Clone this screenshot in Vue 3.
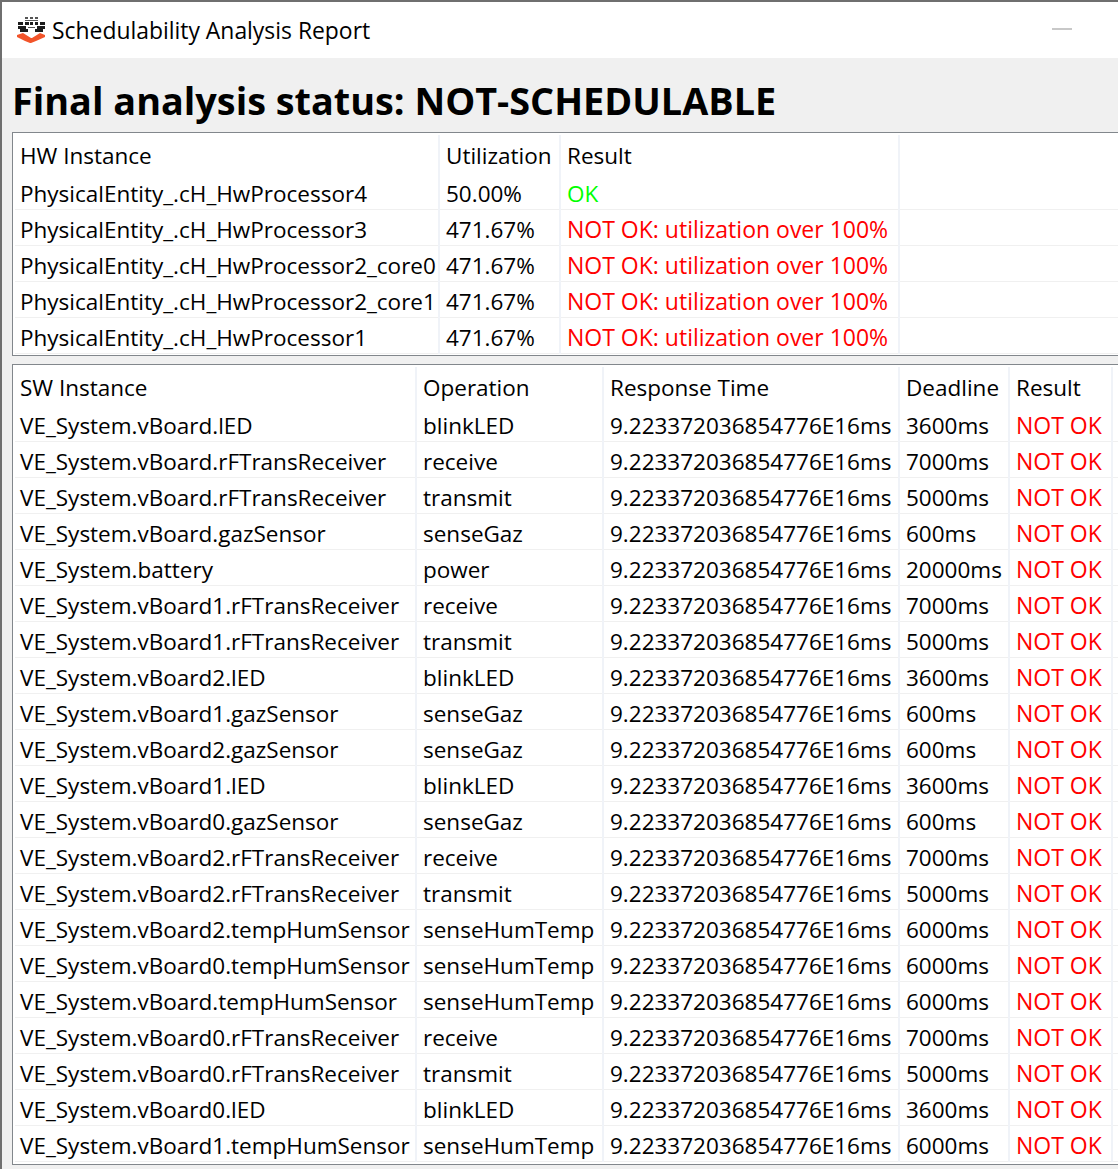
<script setup>
const hwRows = [
  ['PhysicalEntity_.cH_HwProcessor4', '50.00%', 'OK'],
  ['PhysicalEntity_.cH_HwProcessor3', '471.67%', 'NOT OK: utilization over 100%'],
  ['PhysicalEntity_.cH_HwProcessor2_core0', '471.67%', 'NOT OK: utilization over 100%'],
  ['PhysicalEntity_.cH_HwProcessor2_core1', '471.67%', 'NOT OK: utilization over 100%'],
  ['PhysicalEntity_.cH_HwProcessor1', '471.67%', 'NOT OK: utilization over 100%'],
]
const rt = '9.223372036854776E16ms'
const swRows = [
  ['VE_System.vBoard.lED', 'blinkLED', '3600ms'],
  ['VE_System.vBoard.rFTransReceiver', 'receive', '7000ms'],
  ['VE_System.vBoard.rFTransReceiver', 'transmit', '5000ms'],
  ['VE_System.vBoard.gazSensor', 'senseGaz', '600ms'],
  ['VE_System.battery', 'power', '20000ms'],
  ['VE_System.vBoard1.rFTransReceiver', 'receive', '7000ms'],
  ['VE_System.vBoard1.rFTransReceiver', 'transmit', '5000ms'],
  ['VE_System.vBoard2.lED', 'blinkLED', '3600ms'],
  ['VE_System.vBoard1.gazSensor', 'senseGaz', '600ms'],
  ['VE_System.vBoard2.gazSensor', 'senseGaz', '600ms'],
  ['VE_System.vBoard1.lED', 'blinkLED', '3600ms'],
  ['VE_System.vBoard0.gazSensor', 'senseGaz', '600ms'],
  ['VE_System.vBoard2.rFTransReceiver', 'receive', '7000ms'],
  ['VE_System.vBoard2.rFTransReceiver', 'transmit', '5000ms'],
  ['VE_System.vBoard2.tempHumSensor', 'senseHumTemp', '6000ms'],
  ['VE_System.vBoard0.tempHumSensor', 'senseHumTemp', '6000ms'],
  ['VE_System.vBoard.tempHumSensor', 'senseHumTemp', '6000ms'],
  ['VE_System.vBoard0.rFTransReceiver', 'receive', '7000ms'],
  ['VE_System.vBoard0.rFTransReceiver', 'transmit', '5000ms'],
  ['VE_System.vBoard0.lED', 'blinkLED', '3600ms'],
  ['VE_System.vBoard1.tempHumSensor', 'senseHumTemp', '6000ms'],
]
</script>

<template>
  <div class="window">
    <header class="titlebar">
      <svg class="logo" width="30" height="28" viewBox="16 16 30 28">
        <g fill="#555">
          <rect x="25" y="17" width="3" height="2" /><rect x="30" y="17" width="3" height="2" /><rect x="35" y="17" width="3" height="2" />
          <rect x="25" y="20" width="13" height="1" />
          <rect x="28" y="27" width="7" height="1" />
        </g>
        <g fill="#1c1c1c">
          <rect x="18" y="22" width="5" height="3" /><rect x="25" y="22" width="4" height="3" /><rect x="30" y="22" width="3" height="3" /><rect x="35" y="22" width="3" height="3" /><rect x="40" y="22" width="5" height="3" />
          <rect x="18" y="26" width="8" height="3" /><rect x="37" y="26" width="8" height="3" />
          <rect x="20" y="29" width="8" height="3" /><rect x="35" y="29" width="8" height="3" />
        </g>
        <path d="M17 35l6-2 8 5h1l8-5 5 2v2l-9 4-5 2h-1l-5-2-8-4z" fill="#f2542a" />
      </svg>
      <span class="title">Schedulability Analysis Report</span>
      <span class="minimize"></span>
    </header>
    <main class="content">
      <h1 class="status">Final analysis status: NOT-SCHEDULABLE</h1>
      <section class="panel hw">
        <div class="row head">
          <div class="cell">HW Instance</div><div class="cell">Utilization</div><div class="cell">Result</div><div class="cell"></div>
        </div>
        <div v-for="(r, i) in hwRows" :key="i" class="row">
          <div class="cell">{{ r[0] }}</div>
          <div class="cell">{{ r[1] }}</div>
          <div class="cell" :class="r[2] === 'OK' ? 'ok' : 'bad'">{{ r[2] }}</div>
          <div class="cell"></div>
        </div>
      </section>
      <section class="panel sw">
        <div class="row head">
          <div class="cell">SW Instance</div><div class="cell">Operation</div><div class="cell">Response Time</div><div class="cell">Deadline</div><div class="cell">Result</div><div class="cell"></div>
        </div>
        <div v-for="(r, i) in swRows" :key="i" class="row">
          <div class="cell">{{ r[0] }}</div>
          <div class="cell">{{ r[1] }}</div>
          <div class="cell">{{ rt }}</div>
          <div class="cell">{{ r[2] }}</div>
          <div class="cell bad">NOT OK</div>
          <div class="cell"></div>
        </div>
      </section>
    </main>
  </div>
</template>

<style>
html, body { margin: 0; background: #f0f0f0; overflow: hidden; }
</style>
<style scoped>
.window {
  width: 1118px;
  height: 1169px;
  box-sizing: border-box;
  border-top: 2px solid #6f6f6f;
  border-left: 2px solid #6f6f6f;
  background: #f0f0f0;
  font-family: "Open Sans", "Noto Sans", sans-serif;
  color: #000;
  overflow: hidden;
}
.titlebar {
  height: 56px;
  background: #fff;
  display: flex;
  align-items: center;
  padding-left: 14px;
  position: relative;
}
.logo { flex: none; }
.title { margin-left: 6px; font-size: 22.9px; line-height: 58px; height: 56px; }
.minimize {
  position: absolute;
  left: 1050px;
  top: 26px;
  width: 20px;
  height: 2px;
  background: #c8c8c8;
}
.content { padding-left: 10px; }
.status {
  margin: 0;
  height: 74px;
  line-height: 86px;
  font-size: 37.8px;
  font-weight: 700;
  white-space: nowrap;
}
.panel {
  width: 1120px;
  box-sizing: border-box;
  background: #fff;
  border: 1px solid #82878c;
  padding: 2px 0 0 2px;
}
.hw { height: 224px; margin-bottom: 8px; }
.sw { height: 801px; }
.row {
  display: grid;
  height: 36px;
  box-shadow: inset 0 -1px 0 #f0f0f0;
}
.row.head { height: 39px; box-shadow: none; }
.hw .row { grid-template-columns: 425px 121px 339px 1fr; }
.sw .row { grid-template-columns: 402px 187px 296px 110px 103px 1fr; }
.cell {
  box-sizing: border-box;
  padding-left: 6px;
  border-right: 2px solid #f0f3f8;
  font-size: 22.5px;
  line-height: 40px;
  white-space: nowrap;
  overflow: hidden;
}
.cell:first-child { padding-left: 5px; }
.head .cell { line-height: 42px; }
.ok { color: #00ff00; }
.bad { color: #ff0000; font-size: 23px; line-height: 38px; }
</style>
